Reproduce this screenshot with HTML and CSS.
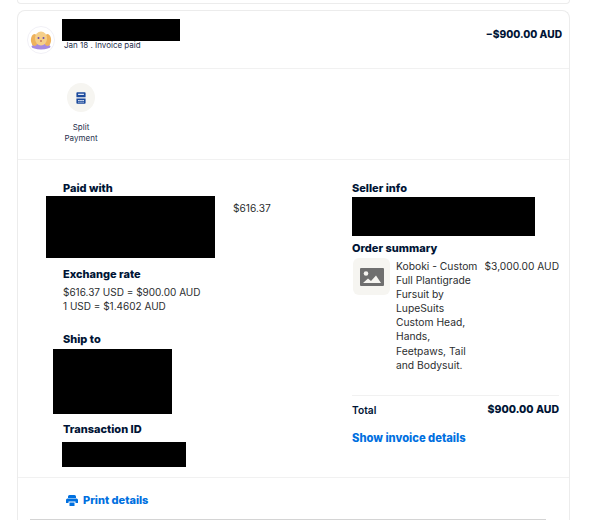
FILE: index.html
```html
<!DOCTYPE html>
<html lang="en">
<head>
  <meta charset="utf-8">
  <meta name="viewport" content="width=device-width,initial-scale=1">
  <title>Transaction details</title>
  <link rel="stylesheet" href="styles.css">
</head>
<body>

  <div class="prev-card"></div>

  <div class="card">
    <header class="head">
      <svg class="avatar" viewBox="0 0 28 28" aria-hidden="true">
        <circle cx="14" cy="14" r="13.5" fill="#fff" stroke="#f1f0f6"/>
        <ellipse cx="14" cy="20.500" rx="9.500" ry="3" fill="#a58ae0"/>
        <ellipse cx="7.500" cy="14" rx="3.600" ry="6" fill="#eeb25c"/>
        <ellipse cx="20.500" cy="14" rx="3.600" ry="6" fill="#eeb25c"/>
        <ellipse cx="14" cy="12.500" rx="6" ry="7" fill="#f5cf8a"/>
        <circle cx="11.500" cy="12" r="1" fill="#6a4fb0"/>
        <circle cx="16.500" cy="12" r="1" fill="#6a4fb0"/>
        <circle cx="14" cy="15" r="1" fill="#c9785a"/>
      </svg>
      <div class="who">
        <div class="redact redact-name"></div>
        <div class="date">Jan 18 . Invoice paid</div>
      </div>
      <div class="amount">−$900.00 AUD</div>
    </header>

    <section class="actions">
      <div class="action">
        <span class="action-icon">
          <svg width="10" height="12" viewBox="0 0 12 14" aria-hidden="true">
            <path fill="#1c4a9c" d="M1.500 0h9a1 1 0 0 1 1 1v5h-11V1a1 1 0 0 1 1-1zM.5 7.500h11V13a1 1 0 0 1-1 1h-9a1 1 0 0 1-1-1z"/>
            <path fill="#dfe7f5" d="M2.500 2h7v1.500h-7zM2.500 9.500h2v1h-2zM5 9.500h2v1H5zM7.500 9.500h2v1h-2zM2.500 11.500h2v1h-2zM5 11.500h2v1H5zM7.500 11.500h2v1h-2z"/>
          </svg>
        </span>
        <span class="action-label">Split<br>Payment</span>
      </div>
    </section>

    <section class="details">
      <div class="col-left">
        <h3>Paid with</h3>
        <div class="paid-row">
          <div class="redact redact-paid"></div>
          <span class="paid-amount">$616.37</span>
        </div>
        <h3 class="rate-title">Exchange rate</h3>
        <p class="rate">$616.37 USD = $900.00 AUD<br>1 USD = $1.4602 AUD</p>
        <h3 class="ship-title">Ship to</h3>
        <div class="redact redact-ship"></div>
        <h3 class="txn-title">Transaction ID</h3>
        <div class="redact redact-txn"></div>
      </div>

      <div class="col-right">
        <h3>Seller info</h3>
        <div class="redact redact-seller"></div>
        <h3 class="order-title">Order summary</h3>
        <div class="order-item">
          <span class="thumb">
            <svg width="24" height="18" viewBox="0 0 24 18" aria-hidden="true">
              <path fill="#6f6f6f" d="M1 0h22a1 1 0 0 1 1 1v16a1 1 0 0 1-1 1H1a1 1 0 0 1-1-1V1a1 1 0 0 1 1-1z"/>
              <circle cx="6" cy="5.500" r="2.300" fill="#f6f5f1"/>
              <path fill="#f6f5f1" d="M3 15l5-4.500 3 2.500 5-5.500 5 7.500z"/>
            </svg>
          </span>
          <div class="item-name">Koboki - Custom Full Plantigrade Fursuit by LupeSuits Custom Head, Hands, Feetpaws, Tail and Bodysuit.</div>
          <div class="item-price">$3,000.00 AUD</div>
        </div>
        <div class="total-row">
          <span class="total-label">Total</span>
          <span class="total-value">$900.00 AUD</span>
        </div>
        <a class="link invoice-link" href="#">Show invoice details</a>
      </div>
    </section>

    <footer class="foot">
      <a class="link print-link" href="#">
        <svg width="12" height="11" viewBox="0 0 12 11" aria-hidden="true">
          <path fill="#0070e0" d="M3.500 0h5A1.500 1.500 0 0 1 10 1.500V3H2V1.500A1.500 1.500 0 0 1 3.500 0zM1.500 3.500h9A1.500 1.500 0 0 1 12 5v3H9.500V6.500h-7V8H0V5a1.500 1.500 0 0 1 1.500-1.500zM3.500 7.500h5V11h-5z"/>
        </svg>
        Print details
      </a>
    </footer>
  </div>

  <div class="next-card"></div>

</body>
</html>
```

FILE: styles.css
```css
:root {
  --navy:   #001435;
  --text:   #2c2e2f;
  --blue:   #0070e0;
  --line:   #f1f1f1;
  --border: #ececec;
  --tile:   #f6f5f1;
}
* { margin:0; padding:0; box-sizing:border-box; }
html, body { height:520px; overflow:hidden; }
body {
  font-family:Inter,"Liberation Sans",sans-serif;
  font-size:10.2px;
  line-height:14px;
  background:#fff;
  color:var(--text);
}
h3 { font-size:11px; line-height:12px; font-weight:800; color:var(--navy); }
a { text-decoration:none; }

.prev-card {
  width:553px; height:4px; margin-left:17px;
  border:1px solid var(--border); border-top:none;
  border-radius:0 0 8px 8px;
}
.card {
  position:relative;
  width:553px; height:510px; margin:6px 0 0 17px;
  border:1px solid var(--border); border-bottom:none;
  border-radius:8px 8px 0 0;
}
.next-card {
  position:absolute; left:30px; top:519px;
  width:516px; height:1px;
  background:#d4d4d4;
}

/* haut de la carte */
.head {
  display:flex; align-items:flex-start;
  height:58px; padding:8px 7px 0 9px;
  border-bottom:1px solid var(--line);
}
.avatar { width:28px; height:28px; margin-top:7px; flex:none; }
.who { margin-left:7px; flex:1; }
.date { font-size:8px; line-height:10px; margin:-1px 0 0 2px; color:#1f2f4d; }
.amount { font-size:10.2px; font-weight:800; color:var(--navy); margin-top:8px; }

.redact { background:#000; }
.redact-name   { width:118px; height:22px; }
.redact-paid   { width:169px; height:62px; margin-left:-17px; }
.redact-ship   { width:119px; height:65px; margin:4px 0 0 -10px; }
.redact-txn    { width:124px; height:25px; margin:7px 0 0 -1px; }
.redact-seller { width:183px; height:39px; margin-top:3px; }

/* split payment */
.actions {
  height:91px; padding:14px 0 0 44px;
  border-bottom:1px solid var(--line);
}
.action { display:flex; flex-direction:column; align-items:center; width:38px; }
.action-icon {
  display:flex; align-items:center; justify-content:center;
  width:28px; height:29px; border-radius:50%;
  background:var(--tile);
}
.action-label {
  font-size:8px; line-height:11px; text-align:center;
  margin-top:10px; color:#1f2f4d;
}

/* colonnes */
.details {
  display:flex;
  height:318px; padding:22px 10px 0 45px;
  border-bottom:1px solid var(--line);
}
.col-left { flex:none; width:289px; }
.col-right { flex:none; width:207px; }

.paid-row { display:flex; margin-top:2px; }
.paid-amount { margin:5px 0 0 18px; }
.rate-title { margin-top:10px; }
.rate { margin-top:5px; font-size:10px; }
.ship-title { margin-top:20px; }
.txn-title { margin-top:9px; }

.order-title { margin-top:6px; }
.order-item { display:flex; align-items:flex-start; margin-top:4px; height:131px; }
.thumb {
  display:flex; align-items:center; justify-content:center;
  flex:none; width:37px; height:37px; margin-left:1px;
  border-radius:6px; background:var(--tile);
}
.item-name { flex:none; width:84px; margin:1px 0 0 6px; line-height:14.1px; font-size:10.3px; }
.item-price { flex:1; margin-top:1px; text-align:right; white-space:nowrap; }

.total-row {
  display:flex; justify-content:space-between;
  margin-top:6px; padding-top:7px;
  border-top:1px solid var(--line);
}
.total-label { font-weight:600; color:var(--navy); }
.total-value { font-size:10.5px; font-weight:800; color:var(--navy); }

.link { color:var(--blue); font-size:11px; font-weight:800; }
.invoice-link { display:block; margin-top:14px; font-size:11.2px; }

.foot { padding:15px 0 0 48px; }
.print-link { display:flex; align-items:center; gap:5px; }
```
